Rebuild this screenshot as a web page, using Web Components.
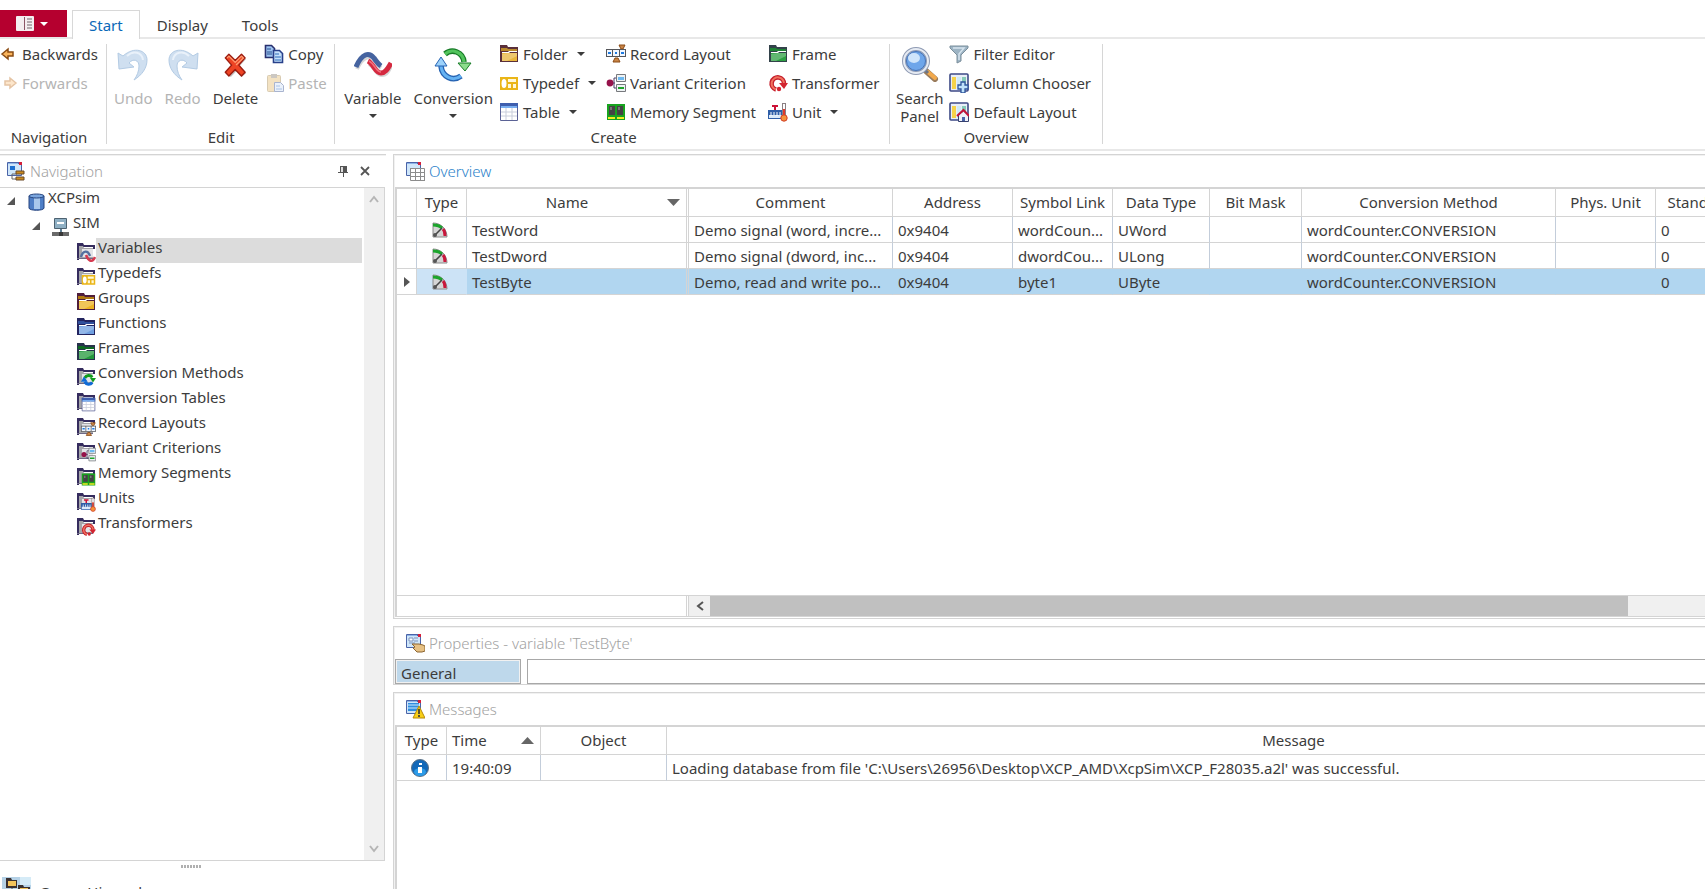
<!DOCTYPE html>
<html lang="en">
<head>
<meta charset="utf-8">
<title>Database Editor</title>
<style>
html, body {
	height: 100%;
	margin: 0;
}

body {
	background: #fff;
	color: #3c3c3c;
	font: 15px/20px "Noto Sans", "Open Sans", sans-serif;
	overflow: hidden;
}
</style>
</head>
<body>
<database-editor></database-editor>

<script>
// ---- icons: [width, height, markup] ----

const folder = (dark, top, light) => `
	<path d="M1 1h7l1 2h10v15H1z" fill="${dark}"/>
	<path d="M2 4h6l1 1h9v2H2z" fill="${top}"/>
	<path d="M3 8h6l1-1h8v1h-7l-1 1H3z" fill="#fff"/>
	<path d="M3 9h15v8H3z" fill="${light}"/>
	<path d="M10 9h8v3L8 17H3v-7z" fill="#fff" opacity=".25"/>`;

const greyFolder = `
	<path d="M1 1h6l1 2h11v4h-2V5H3v13H1z" fill="#352c5e"/>
	<path d="M3 4h4l1 2h9v11H3z" fill="#a5a5a9"/>
	<path d="M6 7h11v8H6z" fill="#e4e4e7"/>
	<path d="M1 16h16v1H1z" fill="#6f6a86"/>`;

const monitor = `
	<rect x="1" y="1" width="15" height="14" rx="1" fill="#4a64a8"/>
	<rect x="2" y="3" width="13" height="11" fill="#cfe6fa"/>
	<path d="M2 2h10v1H2z" fill="#8db4e8"/>
	<rect x="13" y="1" width="3" height="3" fill="#d5203a"/>`;

const recordShape = `
	<path d="M13 1h6l-2 4h-2zM7 18l2-4h3l2 4z" fill="#c98547" stroke="#8a4a14"/>
	<path d="M0 5h20v8H0z" fill="#55565a"/>
	<path d="M1 6h5v6H1zM7 6h6v6H7zM14 6h5v6h-5z" fill="#f2f7ff"/>
	<path d="M2 8h3v2H2zM9 8h2v2H9zM15 8h3v2h-3z" fill="#1f7be0"/>`;

const variantShape = `
	<path d="M4 10h5M8 5v10M8 5h3M8 15h3" stroke="#4a3d68" fill="none"/>
	<circle cx="4" cy="10" r="3.4" fill="#96124a"/>
	<path d="M10.500 1.500h9v7h-9zM10.500 11.500h9v7h-9z" fill="#eef2f4" stroke="#77797d"/>
	<path d="M12 4h6v3h-6z" fill="#6bb8f0"/><path d="M12 14h6v2h-6z" fill="#1da52b"/>`;

const memoryShape = `
	<path d="M1 2h18v16H1z" fill="#18a31f"/>
	<path d="M3 4h6v9H3zM11 4h6v9h-6z" fill="#444"/>
	<path d="M4 5h2v3H4zM12 5h2v3h-2z" fill="#777"/>
	<path d="M2 15h7v2H2zM11 15h7v2h-7z" fill="#f4ec25"/>`;

const unitShape = `
	<path d="M4 4h6M7 3v5" stroke="#cc1236" stroke-width="2"/>
	<path d="M0 8h15v9H0z" fill="#2f5ea8"/>
	<path d="M1 13h13v3H1z" fill="#dcebfa"/>
	<path d="M3 10v4M6 10v3M9 10v4M12 10v3" stroke="#fff"/>
	<path d="M14 1h4v12h-4z" fill="#8a7f83"/><path d="M15 2h2v6h-2z" fill="#fff"/>
	<path d="M15 7h2v8h-2z" fill="#e2382c"/>
	<circle cx="16" cy="16" r="3.200" fill="#f5923a" stroke="#cf3b25"/>`;

const transformShape = `
	<path d="M8 16.500A6.200 6.200 0 1 1 16 11" fill="none" stroke="#c51f2c" stroke-width="4.600"/>
	<path d="M8 16.500A6.200 6.200 0 1 1 16 11" fill="none" stroke="#f1735f" stroke-width="2"/>
	<path d="M11 10h9l-4 6z" fill="#d32430"/><circle cx="11" cy="16" r="2.200" fill="#d32430"/>`;

const tableShape = `
	<path d="M1.500 1.500h17v17h-17z" fill="#fff" stroke="#5b6295"/>
	<path d="M1 1h18v5H1z" fill="#3f5fae"/><path d="M2 4h16v2H2z" fill="#79aef0"/>
	<path d="M2 10h16M2 14h16M7 6v12M13 6v12" stroke="#c9cedb"/>`;

const typedefShape = `
	<path d="M1 4h18v13H1z" fill="#eab517"/>
	<path d="M9 6h8v3H9zM9 11h3v4H9zM14 11h3v4h-3z" fill="#fff8d8"/>
	<ellipse cx="5" cy="10.500" rx="2.500" ry="4.500" fill="#fff"/>`;

const cycleShape = `
	<path d="M5 8a6 6 0 0 1 10-1" fill="none" stroke="#119c1c" stroke-width="4"/>
	<path d="M20 8h-8l4 6z" fill="#119c1c"/>
	<path d="M15 14a6 6 0 0 1-10-1" fill="none" stroke="#0f6bd6" stroke-width="4"/>
	<path d="M0 13h9L4 6z" fill="#0f6bd6"/>`;

const overlay = (shape) =>
	`${greyFolder}<g transform="translate(5 5) scale(.75)">${shape}</g>`;

const columnsShape = `
	<rect x="1" y="1" width="18" height="17" rx="1" fill="#e8eef8" stroke="#3e4a86" stroke-width="1.600"/>
	<path d="M3 4h4v12H3z" fill="#f6d34a"/>
	<path d="M8 4h4v12H8z" fill="#cfe9f6"/>
	<path d="M13 4h4v12h-4z" fill="#86cbb8"/>`;

const ICONS = {
	app: [18, 15, `
		<rect width="18" height="15" rx="1" fill="#f4eef0"/>
		<path d="M8 1h1v13H8z" fill="#8c5565"/>
		<path d="M11 3h5M11 6h5M11 9h5M11 12h5" stroke="#75656b"/>`],
	back: [18, 18, `<path d="M2 9l6-5v3h5v4H8v3z" fill="#f9b45c" stroke="#8a4b12" stroke-width="1.500"/>`],
	forward: [18, 18, `<path d="M16 9l-6-5v3H5v4h5v3z" fill="#fde6cb" stroke="#e5c4a4" stroke-width="1.500"/>`],
	undo: [36, 36, `
		<path d="M3 7l1 16 15-2-5-4c4-5 10-3 10 3 0 5-2 10-5 14 8-5 13-12 13-20C32 4 19 0 8 10z" fill="#cfdff0" stroke="#b3cbe4"/>
		<path d="M12 10c6-6 15-4 16 4" fill="none" stroke="#e9f1fa" stroke-width="2"/>`],
	redo: [36, 36, `
		<path d="M33 7l-1 16-15-2 5-4c-4-5-10-3-10 3 0 5 2 10 5 14-8-5-13-12-13-20C4 4 17 0 28 10z" fill="#cfdff0" stroke="#b3cbe4"/>
		<path d="M24 10c-6-6-15-4-16 4" fill="none" stroke="#e9f1fa" stroke-width="2"/>`],
	delete: [36, 36, `
		<path d="M8 11l4-4 6 6 6-6 5 4-7 8 7 8-5 4-6-6-6 6-5-4 7-8z" fill="#888" opacity=".5" transform="translate(3 3) scale(.9)"/>
		<path d="M7 11l4-4 7 7 7-7 4 4-7 8 7 8-4 4-7-7-7 7-4-4 7-8z" fill="#ee4424" stroke="#9c1c10" stroke-width="1.600" stroke-linejoin="round" transform="translate(2 2) scale(.9)"/>
		<path d="M9 11l2-2 7 7 7-7 2 2-8 8" fill="none" stroke="#ff9a70" stroke-width="1.500" transform="translate(2 2) scale(.9)"/>`],
	copy: [20, 20, `
		<path d="M1.500 1.500h6l3 3v9h-9z" fill="#9cc2f0" stroke="#28306e" stroke-width="1.600"/>
		<path d="M3 5h4M3 8h5M3 10h5" stroke="#28508e"/>
		<path d="M9.500 6.500h6l3 3v9h-9z" fill="#c5e0fb" stroke="#28408a" stroke-width="1.600"/>
		<path d="M11 10h4M11 13h6M11 16h6" stroke="#2d6ab8"/>`],
	paste: [20, 20, `
		<rect x="3.500" y="2.500" width="13" height="16" rx="1" fill="#f3e2c2" stroke="#d8cbb2"/>
		<path d="M7 1h6v4H7z" fill="#ccc8c2"/>
		<path d="M10.500 9.500h6l3 3v6h-9z" fill="#eaf1fb" stroke="#a9b4cf"/>
		<path d="M12 13h4M12 16h6" stroke="#a8c2e6"/>`],
	variable: [38, 36, `
		<path d="M3 23C9 9 17 9 21 15q3 5 6 7M15 18c6 3 7 11 13 11 5 0 7-5 9-9" fill="none" stroke="#999" stroke-width="4" opacity=".4"/>
		<path d="M2 21C8 7 15 6 20 12q4 6 7 8" fill="none" stroke="#45639f" stroke-width="5"/>
		<path d="M14 15c6 3 7 12 13 12 5 0 7-5 10-10" fill="none" stroke="#d5293f" stroke-width="5"/>
		<path d="M15 15c6 3 7 11 12 11" fill="none" stroke="#f0707d" stroke-width="1.500"/>`],
	conversion: [38, 36, `
		<path d="M11 8c7-6 18-2 19 8" fill="none" stroke="#187c28" stroke-width="5.600"/>
		<path d="M11 8c7-6 18-2 19 8" fill="none" stroke="#52c45c" stroke-width="3"/>
		<path d="M24 17h13l-6 8z" fill="#8cdd8c" stroke="#187c28"/>
		<path d="M27 30C19 36 8 31 7 20" fill="none" stroke="#2663b2" stroke-width="5.600"/>
		<path d="M27 30C19 36 8 31 7 20" fill="none" stroke="#65b2f2" stroke-width="3"/>
		<path d="M1 20h12L7 11z" fill="#9cd2fb" stroke="#2663b2"/>`],
	search: [38, 36, `
		<path d="M25 25l9 8" stroke="#9a7c5c" stroke-width="6" stroke-linecap="round"/>
		<path d="M27 26l7 6" stroke="#f2a94c" stroke-width="4" stroke-linecap="round"/>
		<path d="M22 22l5 5" stroke="#6b7484" stroke-width="3"/>
		<circle cx="15" cy="15" r="12" fill="#7eb3ee" stroke="#8f9bb4" stroke-width="4"/>
		<circle cx="15" cy="15" r="12" fill="none" stroke="#e6ebf3" stroke-width="2"/>
		<circle cx="15" cy="15" r="9.500" fill="#6ea6ea" stroke="#4a73b4"/>
		<ellipse cx="13" cy="12" rx="6" ry="5" fill="#cfe5fb"/>`],
	folder: [20, 20, folder('#5a2f3a', '#b98a2c', '#e8b53c')],
	frame: [20, 20, folder('#33424a', '#1f8335', '#2c9f42')],
	typedef: [20, 20, typedefShape],
	table: [20, 20, tableShape],
	record: [20, 20, recordShape],
	variant: [20, 20, variantShape],
	memory: [20, 20, memoryShape],
	transform: [20, 20, transformShape],
	unit: [20, 20, unitShape],
	filter: [20, 20, `
		<path d="M1 2h18v2l-7 7v6l-4 2v-8L1 4z" fill="#9db4c4" stroke="#7b8e9b"/>
		<path d="M4 4h11l-5 6v6" fill="none" stroke="#d6e4ee" stroke-width="1.500"/>`],
	columns: [20, 20, `${columnsShape}
		<path d="M12 9h4v3h3v4h-3v4h-4v-4H9v-4h3z" fill="#bfe2fa" stroke="#2f559c" stroke-width="1.300"/>`],
	layout: [20, 20, `${columnsShape}
		<path d="M9.500 13l5-4 5 4v6.500h-10z" fill="#eef1f8" stroke="#35406e"/>
		<path d="M8 14l6.500-6L20 14" fill="none" stroke="#c4143a" stroke-width="2"/>
		<path d="M13 15h3v4h-3z" fill="#4a64a8"/>`],
	navPanel: [20, 20, `${monitor}<path d="M4 5h5v4H4z" fill="#1c6fd0"/>
		<path d="M6 13v5h5M6 13h5" stroke="#666" fill="none"/>
		<path d="M10 10h8v3h-8zM10 16h8v3h-8z" fill="#c98a1f" stroke="#6b4b28"/>`],
	overviewPanel: [20, 20, `${monitor}
		<path d="M5 7h15v13H5z" fill="#fff"/>
		<path d="M5.500 7v12.500H20M5 7.500h14.500V20M5 11.500h15M5 15.500h15M10.500 7v13M15.500 7v13" fill="none" stroke="#8c8c8c"/>`],
	propsPanel: [20, 20, `${monitor}
		<path d="M4 5h4v3H4zM9 5h4M9 8h4M4 10h6" fill="#fff" stroke="#7d93bb"/>
		<path d="M7 11h7l4 1 2 1v5l-3 1h-5l-4-4 2-1z" fill="#e7c184" stroke="#8b6430"/>`],
	messagesPanel: [20, 20, `${monitor}
		<path d="M3 4h11v8H3z" fill="#2f8ee0"/><path d="M3 6h11M3 9h11" stroke="#d5ecff"/>
		<path d="M14 7l6 12H8z" fill="#f8cf16" stroke="#b78a08"/>
		<path d="M14 10v5M14 16v2" stroke="#333" stroke-width="1.600"/>`],
	pin: [12, 12, `<path d="M3 1h7v6h1v1H7v4H6V8H1V7h2z" fill="#555"/><path d="M4 2h2v5H4z" fill="#ddd"/>`],
	close: [10, 10, `<path d="M1 1l8 8M9 1L1 9" stroke="#555" stroke-width="1.800"/>`],
	database: [20, 20, `
		<path d="M3 4v12c0 3 15 3 15 0V4z" fill="#4f7fc6" stroke="#26447e"/>
		<path d="M8 6h6v11H8z" fill="#a9c8ec"/>
		<ellipse cx="10.500" cy="4" rx="7.500" ry="2" fill="#7ba6de" stroke="#26447e"/>`],
	device: [20, 20, `
		<path d="M3.500 1.500h12v10h-12z" fill="#8fb0c4" stroke="#4d6271"/>
		<path d="M6 5h7v2H6z" fill="#fff"/>
		<path d="M9 12h2v4H9z" fill="#5e7f94"/><path d="M1 15h17v4H1z" fill="#6a6a6a"/>
		<path d="M8 15h4v4H8z" fill="#383838"/>`],
	tVariables: [20, 20, `${greyFolder}
		<path d="M5 15c2-7 7-7 9-1" fill="none" stroke="#54709f" stroke-width="2.400"/>
		<path d="M10 13c2 5 6 9 9 2" fill="none" stroke="#d53b50" stroke-width="2.600"/>`],
	tTypedefs: [20, 20, overlay(typedefShape)],
	tGroups: [20, 20, folder('#4f1d3c', '#b07a10', '#edb322')],
	tFunctions: [20, 20, folder('#23245f', '#31509c', '#6f9fe0')],
	tFrames: [20, 20, folder('#28324c', '#0e6a22', '#239a3b')],
	tMethods: [20, 20, overlay(cycleShape)],
	tTables: [20, 20, overlay(tableShape)],
	tRecords: [20, 20, overlay(recordShape)],
	tVariants: [20, 20, overlay(variantShape)],
	tMemory: [20, 20, overlay(memoryShape)],
	tUnits: [20, 20, overlay(unitShape)],
	tTransform: [20, 20, overlay(transformShape)],
	signal: [16, 16, `
		<path d="M1 1c8 0 14 6 14 14H1z" fill="#d5d5d5" stroke="#8a8a8a"/>
		<path d="M1 3c4 0 7 1 9 3" fill="none" stroke="#1ca52c" stroke-width="3"/>
		<path d="M11 7c2 2 2 5 2 7" fill="none" stroke="#c9173c" stroke-width="3"/>
		<path d="M2 14l8-8" stroke="#444" stroke-width="1.600"/>
		<circle cx="3" cy="13" r="2" fill="#555"/>`],
	info: [18, 18, `
		<circle cx="9" cy="9" r="8.500" fill="#1268b8" stroke="#5d7286"/>
		<ellipse cx="9" cy="13" rx="6" ry="4" fill="#2c9be8"/>
		<path d="M8 4h3v2H8zM7 8h4v6H7z" fill="#fff"/>`],
	hierarchy: [29, 26, `
		<path d="M0 0h29v26H0z" fill="#b5d1e6"/><path d="M18 0h11v8H18z" fill="#d5ebf7"/>
		<path d="M4 1h5l1 2h5v8H4z" fill="#3a3030"/><path d="M6 4h8v5H6z" fill="#f3c45b"/>
		<path d="M16 8h5l1 2h6v8H16z" fill="#3a3030"/><path d="M18 11h8v5h-8z" fill="#f3c45b"/>
		<path d="M10 11v3h6" stroke="#555" fill="none"/>`],
	caret: [8, 4, `<path d="M0 0h8L4 4z" fill="currentColor"/>`],
	sortDown: [13, 7, `<path d="M0 0h13L6.500 7z" fill="#666"/>`],
	sortUp: [13, 7, `<path d="M0 7h13L6.500 0z" fill="#666"/>`],
	current: [6, 10, `<path d="M0 0l6 5-6 5z" fill="#555"/>`],
	expanded: [8, 8, `<path d="M8 0v8H0z" fill="#555"/>`],
	up: [10, 8, `<path d="M1 7l4-5 4 5" fill="none" stroke="#b5b5b5" stroke-width="2"/>`],
	down: [10, 8, `<path d="M1 1l4 5 4-5" fill="none" stroke="#b5b5b5" stroke-width="2"/>`],
	left: [8, 10, `<path d="M7 1L2 5l5 4" fill="none" stroke="#555" stroke-width="2"/>`],
};

class ThemeIcon extends HTMLElement {
	connectedCallback() {
		const [w, h, body] = ICONS[this.getAttribute('name')];
		this.attachShadow({ mode: 'open' }).innerHTML = `
			<style>
				:host { display: block; flex: none; width: ${w}px; }
				svg { display: block; }
			</style>
			<svg width="${w}" height="${h}" viewBox="0 0 ${w} ${h}" aria-hidden="true">${body}</svg>`;
	}
}

// ---- ribbon ----

class RibbonButton extends HTMLElement {
	connectedCallback() {
		const disabled = this.hasAttribute('disabled') ? 'disabled' : '';
		const menu = this.hasAttribute('menu')
			? '<theme-icon class="menu" name="caret"></theme-icon>'
			: '';
		this.attachShadow({ mode: 'open' }).innerHTML = `
			<style>
				:host { display: block; }
				button {
					display: flex;
					align-items: center;
					gap: 4px;
					height: 29px;
					padding: 0;
					border: 0;
					background: none;
					color: inherit;
					font: inherit;
					white-space: nowrap;
				}
				button:disabled { color: #b4b4b4; }
				.menu { margin-left: 5px; }
				:host([large]) button {
					flex-direction: column;
					gap: 7px;
					height: auto;
					padding: 7px 6px 0;
					line-height: 18px;
				}
				:host([large]) .menu { margin: 0; }
			</style>
			<button ${disabled}>
				<theme-icon name="${this.getAttribute('icon')}"></theme-icon>
				<span><slot></slot></span>
				${menu}
			</button>`;
	}
}

class RibbonGroup extends HTMLElement {
	connectedCallback() {
		this.attachShadow({ mode: 'open' }).innerHTML = `
			<style>
				:host {
					display: block;
					flex: none;
					height: 100px;
					margin: 5px 0;
					border-right: 1px solid #d6d6d6;
				}
				.items { display: flex; height: 88px; margin-top: -5px; }
				.caption { text-align: center; }
			</style>
			<div class="items"><slot></slot></div>
			<div class="caption">${this.getAttribute('caption')}</div>`;
	}
}

class RibbonBar extends HTMLElement {
	connectedCallback() {
		this.attachShadow({ mode: 'open' }).innerHTML = `
			<style>
				:host { display: block; padding-top: 10px; }
				.tabs { display: flex; height: 27px; }
				.tabs button {
					padding: 2px 16px 0;
					border: 1px solid transparent;
					border-bottom: 0;
					background: none;
					color: inherit;
					font: inherit;
				}
				.tabs .app {
					display: flex;
					align-items: center;
					gap: 6px;
					width: 67px;
					margin-right: 5px;
					padding-top: 0;
					background: #b5002f;
					border: 0;
					color: #fff;
				}
				.tabs .active {
					position: relative;
					height: 29px;
					padding-bottom: 2px;
					background: #fff;
					border-color: #d8d8d8;
					color: #0a68b8;
				}
				.page {
					display: flex;
					height: 110px;
					border: solid #e8e8e8;
					border-width: 2px 0;
				}
				.nav { width: 98px; padding-right: 8px; }
				.edit { padding-left: 1px; }
				.create { padding-left: 3px; }
				.edit .col { width: 70px; }
				.create .types { width: 107px; }
				.create .layouts { width: 162px; }
				.create .frames { width: 121px; }
				.overview .col { width: 153px; }
			</style>
			<div class="tabs" role="tablist">
				<button class="app" aria-label="Application menu">
					<theme-icon name="app"></theme-icon><theme-icon name="caret"></theme-icon>
				</button>
				<button class="active" role="tab" aria-selected="true">Start</button>
				<button role="tab">Display</button>
				<button role="tab">Tools</button>
			</div>
			<div class="page">
				<ribbon-group caption="Navigation" class="nav">
					<div class="col">
						<ribbon-button icon="back">Backwards</ribbon-button>
						<ribbon-button icon="forward" disabled>Forwards</ribbon-button>
					</div>
				</ribbon-group>
				<ribbon-group caption="Edit" class="edit">
					<ribbon-button large icon="undo" disabled>Undo</ribbon-button>
					<ribbon-button large icon="redo" disabled>Redo</ribbon-button>
					<ribbon-button large icon="delete">Delete</ribbon-button>
					<div class="col">
						<ribbon-button icon="copy">Copy</ribbon-button>
						<ribbon-button icon="paste" disabled>Paste</ribbon-button>
					</div>
				</ribbon-group>
				<ribbon-group caption="Create" class="create">
					<ribbon-button large menu icon="variable">Variable</ribbon-button>
					<ribbon-button large menu icon="conversion">Conversion</ribbon-button>
					<div class="types">
						<ribbon-button menu icon="folder">Folder</ribbon-button>
						<ribbon-button menu icon="typedef">Typedef</ribbon-button>
						<ribbon-button menu icon="table">Table</ribbon-button>
					</div>
					<div class="layouts">
						<ribbon-button icon="record">Record Layout</ribbon-button>
						<ribbon-button icon="variant">Variant Criterion</ribbon-button>
						<ribbon-button icon="memory">Memory Segment</ribbon-button>
					</div>
					<div class="frames">
						<ribbon-button icon="frame">Frame</ribbon-button>
						<ribbon-button icon="transform">Transformer</ribbon-button>
						<ribbon-button menu icon="unit">Unit</ribbon-button>
					</div>
				</ribbon-group>
				<ribbon-group caption="Overview" class="overview">
					<ribbon-button large icon="search">Search<br>Panel</ribbon-button>
					<div class="col">
						<ribbon-button icon="filter">Filter Editor</ribbon-button>
						<ribbon-button icon="columns">Column Chooser</ribbon-button>
						<ribbon-button icon="layout">Default Layout</ribbon-button>
					</div>
				</ribbon-group>
			</div>`;
	}
}

// ---- docked panels ----

class DockPanel extends HTMLElement {
	connectedCallback() {
		this.attachShadow({ mode: 'open' }).innerHTML = `
			<style>
				:host {
					display: flex;
					flex-direction: column;
					box-sizing: border-box;
					min-width: 0;
					min-height: 0;
					border: 1px solid #d4d4d4;
					border-right: 0;
					padding-left: 1px;
					box-shadow: inset 1px 1px #f1f1f1;
				}
				header {
					display: flex;
					flex: none;
					align-items: center;
					gap: 4px;
					height: 32px;
					padding: var(--header-padding, 0 10px);
					color: #a2a2a2;
				}
				:host([active]) header { color: #2b7fca; }
				h2 { flex: 1; margin: 0; font-size: 15px; font-weight: 300; }
			</style>
			<header>
				<theme-icon name="${this.getAttribute('icon')}"></theme-icon>
				<h2>${this.getAttribute('caption')}</h2>
				<slot name="tools"></slot>
			</header>
			<slot></slot>`;
	}
}

class TreeItem extends HTMLElement {
	connectedCallback() {
		this.setAttribute('role', 'treeitem');
		this.style.setProperty('--level', this.getAttribute('level'));
		this.attachShadow({ mode: 'open' }).innerHTML = `
			<style>
				:host {
					display: flex;
					height: 25px;
					padding-left: calc(var(--level) * 25px);
				}
				.toggle { width: 19px; padding: 9px 0 0 7px; }
				.icon { margin-top: 4px; }
				.label {
					flex: 1;
					margin-right: 2px;
					padding-left: 2px;
					line-height: 19px;
				}
				:host([selected]) .label { background: #dcdcdc; }
			</style>
			<span class="toggle">${this.hasAttribute('expanded') ? '<theme-icon name="expanded"></theme-icon>' : ''}</span>
			<theme-icon class="icon" name="${this.getAttribute('icon')}"></theme-icon>
			<span class="label"><slot></slot></span>`;
	}
}

const TREE = [
	[0, 'database', 'XCPsim'],
	[1, 'device', 'SIM'],
	[2, 'tVariables', 'Variables'],
	[2, 'tTypedefs', 'Typedefs'],
	[2, 'tGroups', 'Groups'],
	[2, 'tFunctions', 'Functions'],
	[2, 'tFrames', 'Frames'],
	[2, 'tMethods', 'Conversion Methods'],
	[2, 'tTables', 'Conversion Tables'],
	[2, 'tRecords', 'Record Layouts'],
	[2, 'tVariants', 'Variant Criterions'],
	[2, 'tMemory', 'Memory Segments'],
	[2, 'tUnits', 'Units'],
	[2, 'tTransform', 'Transformers'],
];

class NavigationPane extends HTMLElement {
	connectedCallback() {
		const items = TREE.map(([level, icon, text]) => `
			<tree-item level="${level}" icon="${icon}" ${level < 2 ? 'expanded' : ''}
				${text === 'Variables' ? 'selected' : ''}>${text}</tree-item>`).join('');
		this.attachShadow({ mode: 'open' }).innerHTML = `
			<style>
				:host { display: flex; min-height: 0; }
				dock-panel {
					--header-padding: 0 12px 0 6px;
					flex: 1;
					padding: 0;
					border-width: 1px 1px 0 0;
					box-shadow: inset 0 1px #f1f1f1;
				}
				button {
					display: grid;
					place-items: center;
					padding: 0;
					border: 0;
					background: none;
					height: 22px;
				}
				.tool { width: 18px; }
				.body {
					display: flex;
					flex: 1;
					min-height: 0;
					margin-right: 1px;
					border: solid #d4d4d4;
					border-width: 1px 1px 1px 0;
				}
				.tree { flex: 1; }
				.scroll {
					display: flex;
					flex-direction: column;
					justify-content: space-between;
					width: 20px;
					background: #f0f0f0;
				}
				.scroll button { width: 20px; }
				.dock { flex: none; height: 28px; overflow: hidden; }
				.grip {
					width: 20px;
					height: 3px;
					margin: 4px auto 9px 181px;
					background: repeating-linear-gradient(90deg, #b0b0b0 0 2px, #fff 2px 3px);
				}
				.entry { display: flex; gap: 8px; padding-left: 2px; color: inherit; text-decoration: none; }
				.entry span { padding-top: 5px; }
			</style>
			<dock-panel icon="navPanel" caption="Navigation">
				<button slot="tools" class="tool" aria-label="Auto hide"><theme-icon name="pin"></theme-icon></button>
				<button slot="tools" class="tool" aria-label="Close"><theme-icon name="close"></theme-icon></button>
				<div class="body">
					<div class="tree" role="tree">${items}</div>
					<div class="scroll">
						<button aria-label="Scroll up"><theme-icon name="up"></theme-icon></button>
						<button aria-label="Scroll down"><theme-icon name="down"></theme-icon></button>
					</div>
				</div>
				<div class="dock">
					<div class="grip"></div>
					<a class="entry" href="#groups"><theme-icon name="hierarchy"></theme-icon><span>Group Hierarchy</span></a>
				</div>
			</dock-panel>`;
	}
}

// columns: { text, width, sort, left, icon, split }
class DataGrid extends HTMLElement {
	set data({ columns, rows, selected }) {
		const total = columns.reduce((sum, c) => sum + c.width, 0);
		const cols = columns.map((c) => `<col style="width: ${c.width}px">`).join('');
		const head = columns.map((c) => `
			<th class="${c.split ? 'split' : ''}"><div class="${c.left ? 'left' : ''}">
				<span>${c.text}</span>${c.sort ? `<theme-icon name="${c.sort}"></theme-icon>` : ''}
			</div></th>`).join('');
		const body = rows.map((row, r) => `
			<tr class="${r === selected ? 'selected' : ''}">
				${row.map((cell, i) => `<td class="${columns[i].split ? 'split' : ''} ${columns[i].icon || ''}">${
					columns[i].icon ? (cell && `<theme-icon name="${cell}"></theme-icon>`) : cell
				}</td>`).join('')}
			</tr>`).join('');

		this.attachShadow({ mode: 'open' }).innerHTML = `
			<style>
				:host {
					display: block;
					flex: 1;
					min-height: 0;
					overflow: hidden;
					border: solid #d4d4d4;
					border-width: 2px 0 0 2px;
				}
				table {
					table-layout: fixed;
					border-spacing: 0;
					width: ${total}px;
				}
				th, td {
					box-sizing: border-box;
					padding: 0 5px;
					border: solid #d4d4d4;
					border-width: 0 1px 1px 0;
					font-weight: 400;
					overflow: hidden;
					white-space: nowrap;
					text-overflow: ellipsis;
				}
				th { height: 28px; padding: 0 0 1px; }
				th div { display: flex; align-items: center; }
				th span { flex: 1; }
				th theme-icon { margin-right: 6px; }
				th .left { padding-left: 5px; text-align: left; }
				td { height: 26px; border-right-color: #c3cdda; }
				.icon, .mark { padding: 0; }
				.icon { padding-right: 3px; }
				.icon theme-icon, .mark theme-icon { margin: 0 auto; }
				.split { border-right: 3px double #d4d4d4; }
				.selected td { background: #b1d6f0; border-right-color: #b1d6f0; }
				.selected .icon { background: #cce3f6; border-right-color: #cce3f6; }
				.selected .mark { background: #fff; border-right-color: #d4d4d4; }
				.selected .split { border-right-color: #d4d4d4; }
			</style>
			<table>
				<colgroup>${cols}</colgroup>
				<thead><tr>${head}</tr></thead>
				<tbody>${body}</tbody>
			</table>`;
	}
}

const VARIABLES = {
	selected: 2,
	columns: [
		{ text: '', width: 20, icon: 'mark' },
		{ text: 'Type', width: 50, icon: 'icon' },
		{ text: 'Name', width: 222, sort: 'sortDown', split: true },
		{ text: 'Comment', width: 204 },
		{ text: 'Address', width: 120 },
		{ text: 'Symbol Link', width: 100 },
		{ text: 'Data Type', width: 97 },
		{ text: 'Bit Mask', width: 92 },
		{ text: 'Conversion Method', width: 254 },
		{ text: 'Phys. Unit', width: 100 },
		{ text: 'Standard', width: 88 },
	],
	rows: [
		['', 'signal', 'TestWord', 'Demo signal (word, incre...', '0x9404', 'wordCoun...', 'UWord', '', 'wordCounter.CONVERSION', '', '0'],
		['', 'signal', 'TestDword', 'Demo signal (dword, inc...', '0x9404', 'dwordCou...', 'ULong', '', 'wordCounter.CONVERSION', '', '0'],
		['current', 'signal', 'TestByte', 'Demo, read and write po...', '0x9404', 'byte1', 'UByte', '', 'wordCounter.CONVERSION', '', '0'],
	],
};

const MESSAGES = {
	columns: [
		{ text: 'Type', width: 50, icon: 'icon' },
		{ text: 'Time', width: 94, sort: 'sortUp', left: true },
		{ text: 'Object', width: 126 },
		{ text: 'Message', width: 1254 },
	],
	rows: [
		['info', '19:40:09', '', "Loading database from file 'C:\\Users\\26956\\Desktop\\XCP_AMD\\XcpSim\\XCP_F28035.a2l' was successful."],
	],
};

class DatabaseEditor extends HTMLElement {
	connectedCallback() {
		this.attachShadow({ mode: 'open' }).innerHTML = `
			<style>
				:host { display: flex; flex-direction: column; height: 100vh; }
				ribbon-bar { flex: none; }
				main {
					display: grid;
					grid-template-columns: 386px minmax(0, 1fr);
					gap: 7px;
					flex: 1;
					min-height: 0;
					margin-top: 3px;
				}
				.work { display: flex; flex-direction: column; gap: 7px; min-width: 0; min-height: 0; }
				.overview { flex: 1; }
				.messages { height: 197px; border-bottom: 0; }
				.scroll {
					display: flex;
					height: 20px;
					margin-bottom: 1px;
					border: solid #d4d4d4;
					border-width: 1px 0 1px 2px;
					background: #f0f0f0;
				}
				.fixed { width: 289px; background: #fff; border-right: 3px double #d4d4d4; }
				.scroll button { display: grid; place-items: center; width: 21px; padding: 0; border: 0; background: none; }
				.thumb { flex: 1; margin-right: 77px; background: #c0c0c0; }
				.props { display: flex; gap: 6px; height: 25px; }
				.props button, .props div { box-sizing: border-box; border: 1px solid #a8a8a8; }
				.props button {
					width: 126px;
					padding: 2px 5px 0;
					background: #bed8eb;
					box-shadow: inset 0 0 0 1px #f1f1f1;
					color: inherit;
					font: inherit;
					text-align: left;
				}
				.props div { flex: 1; border-right: 0; }
			</style>
			<ribbon-bar></ribbon-bar>
			<main>
				<navigation-pane></navigation-pane>
				<div class="work">
					<dock-panel active class="overview" icon="overviewPanel" caption="Overview">
						<data-grid id="variables"></data-grid>
						<div class="scroll">
							<div class="fixed"></div>
							<button aria-label="Scroll left"><theme-icon name="left"></theme-icon></button>
							<div class="thumb"></div>
						</div>
					</dock-panel>
					<dock-panel icon="propsPanel" caption="Properties - variable 'TestByte'">
						<div class="props"><button>General</button><div></div></div>
					</dock-panel>
					<dock-panel class="messages" icon="messagesPanel" caption="Messages">
						<data-grid id="messages"></data-grid>
					</dock-panel>
				</div>
			</main>`;
		this.shadowRoot.querySelector('#variables').data = VARIABLES;
		this.shadowRoot.querySelector('#messages').data = MESSAGES;
	}
}

customElements.define('theme-icon', ThemeIcon);
customElements.define('ribbon-button', RibbonButton);
customElements.define('ribbon-group', RibbonGroup);
customElements.define('ribbon-bar', RibbonBar);
customElements.define('dock-panel', DockPanel);
customElements.define('tree-item', TreeItem);
customElements.define('navigation-pane', NavigationPane);
customElements.define('data-grid', DataGrid);
customElements.define('database-editor', DatabaseEditor);
</script>
</body>
</html>
